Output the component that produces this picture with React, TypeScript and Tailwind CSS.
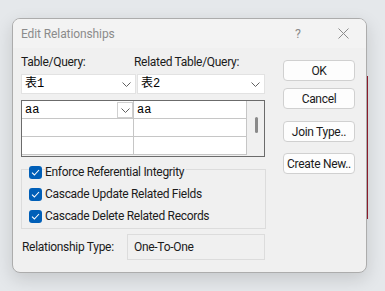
import React from "react";

const ui = { fontFamily: 'Roboto, "Noto Sans", "Liberation Sans", sans-serif' };
const mono = { fontFamily: '"Liberation Mono", "Noto Sans CJK SC", monospace' };

function Chevron({ className = "" }: { className?: string }) {
  return (
    <svg width="9" height="5" viewBox="0 0 9 5" className={className}>
      <path d="M0.5 0.5 L4.5 4.5 L8.5 0.5" fill="none" stroke="#606060" strokeWidth="1" />
    </svg>
  );
}

function Check() {
  return (
    <span className="w-[13px] h-[13px] rounded-[3px] bg-[#005fb8] flex items-center justify-center shrink-0">
      <svg width="9" height="7" viewBox="0 0 9 7">
        <path d="M1 3.6 L3.4 6 L8 1" fill="none" stroke="#ffffff" strokeWidth="1.1" />
      </svg>
    </span>
  );
}

function Btn({ label, className = "" }: { label: string; className?: string }) {
  return (
    <div
      className={
        "w-[72px] h-[21px] bg-[#fdfdfd] border border-[#d0d0d0] rounded-[4px] flex items-center justify-center text-[12px] tracking-[-0.3px] text-[#1b1b1b] leading-none whitespace-nowrap " +
        className
      }
    >
      {label}
    </div>
  );
}

function Cell({ children, w }: { children?: React.ReactNode; w: string }) {
  return (
    <div className={"h-[18px] border-b border-r border-[#c6c6c6] bg-white relative flex items-center " + w}>
      {children}
    </div>
  );
}

export default function App() {
  return (
    <div
      className="w-[385px] h-[291px] bg-[#e5e8eb] flex items-start pt-[18px] pl-[12px] overflow-hidden"
      style={ui}
    >
      <div className="w-[355px] h-[255px] bg-[#f0f0f0] border border-[#acacac] rounded-[8px] shadow-[0_6px_18px_rgba(0,0,0,0.14)] overflow-hidden flex flex-col shrink-0">
        {/* title bar */}
        <div className="h-[29px] bg-[#f3f3f3] flex items-center pl-[8px] pr-[17px] shrink-0">
          <span className="text-[12px] tracking-[-0.1px] text-[#8b8b8b] leading-[16px] mt-[1px]">Edit Relationships</span>
          <span className="ml-auto text-[12.5px] text-[#8b8b8b] leading-[16px] mt-[1px]">?</span>
          <svg width="11" height="11" viewBox="0 0 11 11" className="ml-[37px]">
            <path d="M0.5 0.5 L10.5 10.5 M10.5 0.5 L0.5 10.5" fill="none" stroke="#8b8b8b" strokeWidth="1" />
          </svg>
        </div>
        {/* body */}
        <div className="flex pl-[8px] pt-[6px] tracking-[-0.3px]">
          {/* left column */}
          <div className="w-[245px] flex flex-col">
            <div className="flex text-[12px] leading-[16px] text-[#1b1b1b]">
              <span className="w-[113px]">Table/Query:</span>
              <span>Related Table/Query:</span>
            </div>
            <div className="flex mt-[4px] tracking-normal">
              <div className="w-[115px] h-[20px] bg-white border border-[#e2e2e2] flex items-center pl-[3px] pr-[4px]">
                <span className="text-[12px] leading-none text-black" style={mono}>表1</span>
                <Chevron className="ml-auto" />
              </div>
              <div className="w-[128px] ml-[1px] h-[20px] bg-white border border-[#e2e2e2] flex items-center pl-[3px] pr-[4px]">
                <span className="text-[12px] leading-none text-black" style={mono}>表2</span>
                <Chevron className="ml-auto" />
              </div>
            </div>
            {/* grid */}
            <div className="mt-[6px] w-[244px] h-[57px] border border-[#6b6b6b] flex overflow-hidden tracking-normal">
              <div className="flex flex-col">
                <div className="flex">
                  <Cell w="w-[112px]">
                    <span className="pl-[3px] text-[12px] leading-none" style={mono}>aa</span>
                    <div className="absolute right-0 top-[1px] w-[16px] h-[16px] border border-[#d0d0d0] bg-white flex items-center justify-center">
                      <Chevron />
                    </div>
                  </Cell>
                  <Cell w="w-[113px]">
                    <span className="pl-[3px] text-[12px] leading-none" style={mono}>aa</span>
                  </Cell>
                </div>
                <div className="flex">
                  <Cell w="w-[112px]" />
                  <Cell w="w-[113px]" />
                </div>
                <div className="flex">
                  <Cell w="w-[112px]" />
                  <Cell w="w-[113px]" />
                </div>
              </div>
              <div className="flex-1 bg-[#f0f0f0] flex justify-center pt-[16px] pl-[1px]">
                <div className="w-[3px] h-[16px] rounded-full bg-[#8a8a8a]" />
              </div>
            </div>
            {/* group box */}
            <div className="mt-[12px] w-[245px] h-[60px] border border-[#dcdcdc]">
              <div className="mt-[-9px] flex flex-col text-[12px] text-[#1b1b1b]">
                {["Enforce Referential Integrity", "Cascade Update Related Fields", "Cascade Delete Related Records"].map(
                  (t) => (
                    <div key={t} className="h-[22px] flex items-start pl-[7px]">
                      <div className="flex items-center gap-[3px] h-[22px]">
                        <Check />
                        <span className="leading-[16px] bg-[#f0f0f0] pr-[2px]">{t}</span>
                      </div>
                    </div>
                  )
                )}
              </div>
            </div>
            {/* relationship type */}
            <div className="mt-[5px] flex items-center">
              <span className="w-[106px] pl-[1px] text-[12px] leading-[16px] text-[#1b1b1b]">Relationship Type:</span>
              <div className="w-[138px] h-[26px] border border-[#dcdcdc] flex items-center pl-[6px] text-[12px] text-[#1b1b1b]">
                One-To-One
              </div>
            </div>
          </div>
          {/* right column */}
          <div className="ml-[17px] flex flex-col">
            <Btn label="OK" className="mt-[6px]" />
            <Btn label="Cancel" className="mt-[7px]" />
            <Btn label="Join Type.." className="mt-[12px]" />
            <Btn label="Create New.." className="mt-[11px]" />
          </div>
        </div>
      </div>
      <div className="w-px h-[143px] bg-[#8b1a2b] mt-[58px] shrink-0" />
    </div>
  );
}
